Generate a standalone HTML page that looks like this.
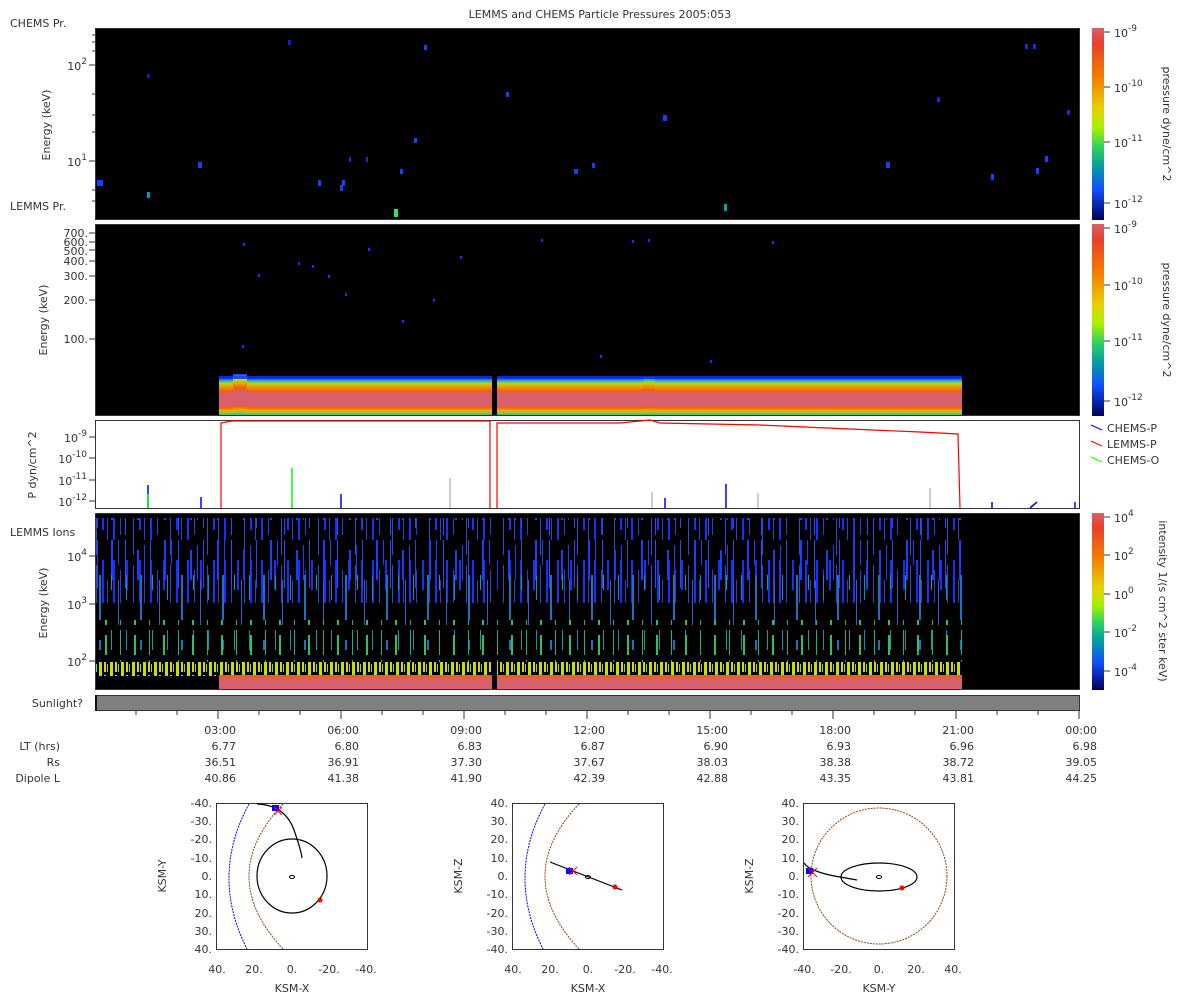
<!DOCTYPE html>
<html><head><meta charset="utf-8"><style>
html,body{margin:0;padding:0;background:#fff}
svg{display:block}
text{font-family:"DejaVu Sans","Liberation Sans",sans-serif;font-size:11px;fill:#333}
</style></head><body>
<svg width="1200" height="1000" viewBox="0 0 1200 1000" xmlns="http://www.w3.org/2000/svg">
<defs>
<linearGradient id="cb" x1="0" y1="0" x2="0" y2="1">
<stop offset="0" stop-color="#d9606a"/><stop offset="0.08" stop-color="#e8402a"/><stop offset="0.25" stop-color="#f57a00"/><stop offset="0.42" stop-color="#e8d000"/><stop offset="0.52" stop-color="#a8f000"/><stop offset="0.62" stop-color="#30d060"/><stop offset="0.72" stop-color="#00a0a0"/><stop offset="0.84" stop-color="#1050ff"/><stop offset="1" stop-color="#000060"/>
</linearGradient>
<linearGradient id="band" x1="0" y1="0" x2="0" y2="1">
<stop offset="0" stop-color="#1030ff"/><stop offset="0.08" stop-color="#30c0a0"/><stop offset="0.14" stop-color="#a0e020"/><stop offset="0.22" stop-color="#f0a000"/><stop offset="0.34" stop-color="#f06010"/><stop offset="0.42" stop-color="#d9606a"/><stop offset="0.72" stop-color="#d9606a"/><stop offset="0.78" stop-color="#f06010"/><stop offset="0.86" stop-color="#f0b000"/><stop offset="0.93" stop-color="#70d040"/><stop offset="1" stop-color="#20a0a0"/>
</linearGradient>
<pattern id="pb" width="37" height="80" patternUnits="userSpaceOnUse">
<rect x="2" y="0" width="2" height="60" fill="#1530ff"/><rect x="9" y="10" width="1" height="45" fill="#2040e0"/><rect x="15" y="0" width="2" height="30" fill="#1a30f0"/><rect x="22" y="5" width="1" height="70" fill="#2050d0"/><rect x="28" y="0" width="2" height="50" fill="#1530ff"/><rect x="33" y="20" width="1" height="40" fill="#3040c0"/>
</pattern>
<pattern id="pb2" width="53" height="60" patternUnits="userSpaceOnUse">
<rect x="5" y="0" width="2" height="40" fill="#1a40ff"/><rect x="19" y="0" width="1" height="55" fill="#2050ff"/><rect x="31" y="10" width="2" height="30" fill="#1840f0"/><rect x="44" y="0" width="1" height="48" fill="#2848e0"/><rect x="12" y="0" width="1" height="25" fill="#1a40ff"/><rect x="38" y="5" width="1" height="35" fill="#1a40ff"/>
</pattern>
<pattern id="pt" width="41" height="70" patternUnits="userSpaceOnUse">
<rect x="3" y="0" width="1" height="40" fill="#1090b0"/><rect x="17" y="10" width="2" height="50" fill="#2070c0"/><rect x="29" y="0" width="1" height="30" fill="#10a0a0"/><rect x="36" y="20" width="1" height="45" fill="#3060d0"/>
</pattern>
<pattern id="pg" width="29" height="30" patternUnits="userSpaceOnUse">
<rect x="4" y="0" width="1" height="25" fill="#20b080"/><rect x="18" y="5" width="2" height="20" fill="#30c060"/>
</pattern>
<pattern id="py" width="11" height="14" patternUnits="userSpaceOnUse">
<rect x="0" y="0" width="3" height="14" fill="#c8e000"/><rect x="5" y="3" width="2" height="11" fill="#e8d000"/><rect x="8" y="6" width="1" height="8" fill="#90e020"/>
</pattern>
</defs>

<text x="600" y="18" text-anchor="middle">LEMMS and CHEMS Particle Pressures  2005:053</text>

<!-- Panel 1 -->
<rect x="95" y="28" width="985" height="192" fill="#000"/>
<g fill="#1540ff">
<rect x="97" y="180" width="6" height="6"/><rect x="147" y="192" width="3" height="6" fill="#1090c0"/><rect x="147" y="74" width="3" height="4" fill="#1020c0"/><rect x="198" y="162" width="4" height="6"/><rect x="288" y="40" width="3" height="5" fill="#1020c0"/><rect x="318" y="180" width="3" height="6"/><rect x="340" y="185" width="3" height="6"/><rect x="342" y="180" width="3" height="6"/><rect x="349" y="157" width="2" height="5" fill="#1030d0"/><rect x="366" y="157" width="2" height="5" fill="#1030d0"/><rect x="394" y="209" width="4" height="8" fill="#30e060"/><rect x="400" y="169" width="3" height="5"/><rect x="414" y="138" width="3" height="5"/><rect x="424" y="45" width="3" height="5"/><rect x="506" y="92" width="3" height="5"/><rect x="574" y="169" width="4" height="5"/><rect x="592" y="163" width="3" height="5"/><rect x="663" y="115" width="4" height="6"/><rect x="724" y="204" width="3" height="7" fill="#10a0a0"/><rect x="886" y="162" width="4" height="6"/><rect x="937" y="97" width="3" height="5" fill="#1030d0"/><rect x="991" y="174" width="3" height="6"/><rect x="1025" y="44" width="3" height="5" fill="#1030d0"/><rect x="1033" y="44" width="3" height="5" fill="#1030d0"/><rect x="1036" y="168" width="3" height="6"/><rect x="1045" y="156" width="3" height="6"/><rect x="1067" y="110" width="3" height="5" fill="#1030d0"/>
</g>
<rect x="95.5" y="28.5" width="984" height="191" fill="none" stroke="#333"/>
<g stroke="#333"><line x1="89" y1="65" x2="95" y2="65"/><line x1="89" y1="161" x2="95" y2="161"/><line x1="92" y1="35" x2="95" y2="35"/><line x1="92" y1="42" x2="95" y2="42"/><line x1="92" y1="51" x2="95" y2="51"/><line x1="92" y1="94" x2="95" y2="94"/><line x1="92" y1="115" x2="95" y2="115"/><line x1="92" y1="132" x2="95" y2="132"/><line x1="92" y1="190" x2="95" y2="190"/><line x1="92" y1="201" x2="95" y2="201"/></g>
<text x="10" y="27">CHEMS Pr.</text>
<text x="10" y="210">LEMMS Pr.</text>
<text x="87" y="70" text-anchor="end" font-size="12">10<tspan dy="-6" font-size="9">2</tspan></text>
<text x="87" y="166" text-anchor="end" font-size="12">10<tspan dy="-6" font-size="9">1</tspan></text>
<text transform="translate(50,125) rotate(-90)" text-anchor="middle">Energy (keV)</text>

<!-- Panel 2 -->
<rect x="95" y="224" width="985" height="192" fill="#000"/>
<rect x="219" y="378" width="743" height="38" fill="url(#band)"/>
<rect x="233" y="374" width="14" height="42" fill="url(#band)"/>
<rect x="643" y="377" width="12" height="39" fill="url(#band)"/>
<rect x="219" y="376" width="743" height="3" fill="#1530ff" opacity="0.8"/>
<rect x="492" y="376" width="5" height="40" fill="#000"/>
<g fill="#1530ff">
<rect x="243" y="243" width="2" height="3"/><rect x="298" y="262" width="2" height="3"/><rect x="312" y="265" width="2" height="3"/><rect x="328" y="275" width="2" height="3"/><rect x="345" y="293" width="2" height="3"/><rect x="368" y="248" width="2" height="3"/><rect x="402" y="320" width="2" height="3"/><rect x="460" y="256" width="2" height="3"/><rect x="541" y="239" width="2" height="3"/><rect x="632" y="240" width="2" height="3"/><rect x="648" y="239" width="2" height="3"/><rect x="772" y="241" width="2" height="3"/><rect x="258" y="274" width="2" height="3"/><rect x="433" y="299" width="2" height="3"/><rect x="710" y="360" width="2" height="3"/><rect x="600" y="355" width="2" height="3"/><rect x="242" y="345" width="2" height="3"/>
</g>
<rect x="95.5" y="224.5" width="984" height="191" fill="none" stroke="#333"/>
<g stroke="#333"><line x1="89" y1="233" x2="95" y2="233"/><line x1="89" y1="242" x2="95" y2="242"/><line x1="89" y1="250" x2="95" y2="250"/><line x1="89" y1="261" x2="95" y2="261"/><line x1="89" y1="276" x2="95" y2="276"/><line x1="89" y1="300" x2="95" y2="300"/><line x1="89" y1="339" x2="95" y2="339"/></g>
<g text-anchor="end" font-size="11">
<text x="88" y="237">700.</text><text x="88" y="246">600.</text><text x="88" y="255">500.</text><text x="88" y="265">400.</text><text x="88" y="280">300.</text><text x="88" y="304">200.</text><text x="88" y="343">100.</text>
</g>
<text transform="translate(47,320) rotate(-90)" text-anchor="middle">Energy (keV)</text>

<!-- Line panel -->
<rect x="95.5" y="420.5" width="984" height="88" fill="#fff" stroke="#333"/>
<polyline points="221,508 221,423 232,421 490,421 490,508" fill="none" stroke="#f00" stroke-width="1.2"/>
<polyline points="497,508 497,423 620,423 650,420 660,423 760,425 850,429 920,432 958,434 960,508" fill="none" stroke="#f00" stroke-width="1.2"/>
<g stroke="#00f" stroke-width="1.5">
<line x1="148" y1="508" x2="148" y2="485"/><line x1="201" y1="508" x2="201" y2="497"/><line x1="341" y1="508" x2="341" y2="494"/><line x1="726" y1="508" x2="726" y2="484"/><line x1="665" y1="508" x2="665" y2="498"/><line x1="992" y1="508" x2="992" y2="502"/><line x1="1030" y1="508" x2="1037" y2="502"/><line x1="1075" y1="508" x2="1075" y2="502"/>
</g>
<g stroke="#0f0" stroke-width="1.5"><line x1="148" y1="508" x2="148" y2="494"/><line x1="292" y1="508" x2="292" y2="468"/></g>
<g stroke="#999" stroke-width="1"><line x1="450" y1="508" x2="450" y2="478"/><line x1="652" y1="508" x2="652" y2="492"/><line x1="758" y1="508" x2="758" y2="493"/><line x1="930" y1="508" x2="930" y2="488"/></g>
<g stroke="#333"><line x1="89" y1="437" x2="95" y2="437"/><line x1="89" y1="458" x2="95" y2="458"/><line x1="89" y1="480" x2="95" y2="480"/><line x1="89" y1="501" x2="95" y2="501"/></g>
<text x="87" y="442" text-anchor="end">10<tspan dy="-6" font-size="9">-9</tspan></text>
<text x="87" y="463" text-anchor="end">10<tspan dy="-6" font-size="9">-10</tspan></text>
<text x="87" y="485" text-anchor="end">10<tspan dy="-6" font-size="9">-11</tspan></text>
<text x="87" y="506" text-anchor="end">10<tspan dy="-6" font-size="9">-12</tspan></text>
<text transform="translate(36,465) rotate(-90)" text-anchor="middle">P dyn/cm^2</text>
<line x1="1091" y1="425" x2="1102" y2="430" stroke="#00f"/><text x="1107" y="432">CHEMS-P</text>
<line x1="1091" y1="441" x2="1102" y2="446" stroke="#f00"/><text x="1107" y="448">LEMMS-P</text>
<line x1="1091" y1="457" x2="1102" y2="462" stroke="#0f0"/><text x="1107" y="464">CHEMS-O</text>

<!-- Panel 4 -->
<rect x="95" y="513" width="985" height="177" fill="#000"/>
<rect x="95" y="518" width="867" height="85" fill="url(#pb)"/>
<rect x="95" y="518" width="867" height="70" fill="url(#pb2)"/>
<rect x="95" y="575" width="867" height="75" fill="url(#pt)"/>
<rect x="95" y="620" width="867" height="42" fill="url(#pg)"/>
<rect x="95" y="662" width="867" height="14" fill="url(#py)"/>
<rect x="219" y="676" width="743" height="14" fill="#d9606a"/>
<rect x="219" y="675" width="743" height="3" fill="#f06010"/>
<rect x="492" y="513" width="5" height="177" fill="#000"/>
<rect x="95.5" y="513.5" width="984" height="176" fill="none" stroke="#333"/>
<g stroke="#333"><line x1="89" y1="556" x2="95" y2="556"/><line x1="89" y1="604" x2="95" y2="604"/><line x1="89" y1="661" x2="95" y2="661"/></g>
<text x="10" y="536">LEMMS Ions</text>
<text x="87" y="561" text-anchor="end" font-size="12">10<tspan dy="-6" font-size="9">4</tspan></text>
<text x="87" y="609" text-anchor="end" font-size="12">10<tspan dy="-6" font-size="9">3</tspan></text>
<text x="87" y="666" text-anchor="end" font-size="12">10<tspan dy="-6" font-size="9">2</tspan></text>
<text transform="translate(47,603) rotate(-90)" text-anchor="middle">Energy (keV)</text>

<!-- Sunlight -->
<rect x="95.5" y="695.5" width="984" height="15" fill="#808080" stroke="#333"/>
<rect x="95" y="695" width="2" height="16" fill="#111"/>
<text x="83" y="707" text-anchor="end">Sunlight?</text>

<!-- Colorbars -->
<rect x="1092" y="28" width="12" height="192" fill="url(#cb)"/>
<rect x="1092" y="224" width="12" height="192" fill="url(#cb)"/>
<rect x="1092" y="513" width="12" height="177" fill="url(#cb)"/>
<g stroke="#333">
<line x1="1104" y1="32" x2="1110" y2="32"/><line x1="1104" y1="87" x2="1110" y2="87"/><line x1="1104" y1="142" x2="1110" y2="142"/><line x1="1104" y1="203" x2="1110" y2="203"/>
<line x1="1104" y1="228" x2="1110" y2="228"/><line x1="1104" y1="285" x2="1110" y2="285"/><line x1="1104" y1="341" x2="1110" y2="341"/><line x1="1104" y1="401" x2="1110" y2="401"/>
<line x1="1104" y1="517" x2="1110" y2="517"/><line x1="1104" y1="555" x2="1110" y2="555"/><line x1="1104" y1="594" x2="1110" y2="594"/><line x1="1104" y1="632" x2="1110" y2="632"/><line x1="1104" y1="671" x2="1110" y2="671"/>
</g>
<g font-size="12">
<text x="1114" y="37">10<tspan dy="-6" font-size="9">-9</tspan></text>
<text x="1114" y="92">10<tspan dy="-6" font-size="9">-10</tspan></text>
<text x="1114" y="147">10<tspan dy="-6" font-size="9">-11</tspan></text>
<text x="1114" y="208">10<tspan dy="-6" font-size="9">-12</tspan></text>
<text x="1114" y="233">10<tspan dy="-6" font-size="9">-9</tspan></text>
<text x="1114" y="290">10<tspan dy="-6" font-size="9">-10</tspan></text>
<text x="1114" y="346">10<tspan dy="-6" font-size="9">-11</tspan></text>
<text x="1114" y="406">10<tspan dy="-6" font-size="9">-12</tspan></text>
<text x="1114" y="522">10<tspan dy="-6" font-size="9">4</tspan></text>
<text x="1114" y="560">10<tspan dy="-6" font-size="9">2</tspan></text>
<text x="1114" y="599">10<tspan dy="-6" font-size="9">0</tspan></text>
<text x="1114" y="637">10<tspan dy="-6" font-size="9">-2</tspan></text>
<text x="1114" y="676">10<tspan dy="-6" font-size="9">-4</tspan></text>
</g>
<text transform="translate(1163,124) rotate(90)" text-anchor="middle">pressure dyne/cm^2</text>
<text transform="translate(1163,320) rotate(90)" text-anchor="middle">pressure dyne/cm^2</text>
<text transform="translate(1159,601) rotate(90)" text-anchor="middle">intensity 1/(s cm^2 ster keV)</text>

<!-- time axis ticks -->
<g stroke="#333">
<line x1="136" y1="711" x2="136" y2="715"/><line x1="177" y1="711" x2="177" y2="715"/><line x1="218" y1="711" x2="218" y2="719"/>
<line x1="259" y1="711" x2="259" y2="715"/><line x1="300" y1="711" x2="300" y2="715"/><line x1="341" y1="711" x2="341" y2="719"/>
<line x1="382" y1="711" x2="382" y2="715"/><line x1="423" y1="711" x2="423" y2="715"/><line x1="464" y1="711" x2="464" y2="719"/>
<line x1="505" y1="711" x2="505" y2="715"/><line x1="546" y1="711" x2="546" y2="715"/><line x1="587" y1="711" x2="587" y2="719"/>
<line x1="628" y1="711" x2="628" y2="715"/><line x1="669" y1="711" x2="669" y2="715"/><line x1="710" y1="711" x2="710" y2="719"/>
<line x1="751" y1="711" x2="751" y2="715"/><line x1="792" y1="711" x2="792" y2="715"/><line x1="833" y1="711" x2="833" y2="719"/>
<line x1="874" y1="711" x2="874" y2="715"/><line x1="915" y1="711" x2="915" y2="715"/><line x1="956" y1="711" x2="956" y2="719"/>
<line x1="997" y1="711" x2="997" y2="715"/><line x1="1038" y1="711" x2="1038" y2="715"/><line x1="1079" y1="711" x2="1079" y2="719"/>
</g>
<g text-anchor="end">
<text x="236" y="734">03:00</text><text x="359" y="734">06:00</text><text x="482" y="734">09:00</text><text x="605" y="734">12:00</text><text x="728" y="734">15:00</text><text x="851" y="734">18:00</text><text x="974" y="734">21:00</text><text x="1097" y="734">00:00</text>
<text x="236" y="750">6.77</text><text x="359" y="750">6.80</text><text x="482" y="750">6.83</text><text x="605" y="750">6.87</text><text x="728" y="750">6.90</text><text x="851" y="750">6.93</text><text x="974" y="750">6.96</text><text x="1097" y="750">6.98</text>
<text x="236" y="766">36.51</text><text x="359" y="766">36.91</text><text x="482" y="766">37.30</text><text x="605" y="766">37.67</text><text x="728" y="766">38.03</text><text x="851" y="766">38.38</text><text x="974" y="766">38.72</text><text x="1097" y="766">39.05</text>
<text x="236" y="782">40.86</text><text x="359" y="782">41.38</text><text x="482" y="782">41.90</text><text x="605" y="782">42.39</text><text x="728" y="782">42.88</text><text x="851" y="782">43.35</text><text x="974" y="782">43.81</text><text x="1097" y="782">44.25</text>
<text x="60" y="750">LT (hrs)</text><text x="60" y="766">Rs</text><text x="60" y="782">Dipole L</text>
</g>

<!-- Orbit plot 1 -->
<g>
<rect x="216.5" y="803.5" width="151" height="146" fill="none" stroke="#333"/>
<g text-anchor="end" font-size="11"><text x="212" y="807">-40.</text><text x="212" y="825">-30.</text><text x="212" y="843">-20.</text><text x="212" y="862">-10.</text><text x="212" y="880">0.</text><text x="212" y="898">10.</text><text x="212" y="917">20.</text><text x="212" y="935">30.</text><text x="212" y="953">40.</text></g>
<g text-anchor="middle"><text x="217" y="973">40.</text><text x="254" y="973">20.</text><text x="292" y="973">0.</text><text x="329" y="973">-20.</text><text x="366" y="973">-40.</text></g>
<text x="292" y="992" text-anchor="middle">KSM-X</text>
<text transform="translate(166,876) rotate(-90)" text-anchor="middle">KSM-Y</text>
<path d="M249,804 Q210,876 247,949" fill="none" stroke="#00f" stroke-dasharray="2,1"/>
<path d="M283,804 Q215,876 283,949" fill="none" stroke="#8b4513" stroke-dasharray="2,1"/>
<ellipse cx="292" cy="876" rx="35" ry="37" fill="none" stroke="#000" stroke-width="1.2"/>
<ellipse cx="292" cy="877" rx="2.5" ry="1.5" fill="none" stroke="#000"/>
<path d="M257,804 Q285,805 294,830 Q301,850 302,858" fill="none" stroke="#000" stroke-width="1.2"/>
<rect x="272" y="805" width="7" height="6" fill="#00f"/>
<path d="M274,807 l8,8 M282,807 l-8,8" stroke="#f00"/>
<circle cx="320" cy="900" r="2.5" fill="#f00"/>
</g>

<!-- Orbit plot 2 -->
<g>
<rect x="512.5" y="803.5" width="151" height="146" fill="none" stroke="#333"/>
<g text-anchor="end" font-size="11"><text x="508" y="807">40.</text><text x="508" y="825">30.</text><text x="508" y="843">20.</text><text x="508" y="862">10.</text><text x="508" y="880">0.</text><text x="508" y="898">-10.</text><text x="508" y="917">-20.</text><text x="508" y="935">-30.</text><text x="508" y="953">-40.</text></g>
<g text-anchor="middle"><text x="513" y="973">40.</text><text x="550" y="973">20.</text><text x="588" y="973">0.</text><text x="625" y="973">-20.</text><text x="662" y="973">-40.</text></g>
<text x="588" y="992" text-anchor="middle">KSM-X</text>
<text transform="translate(462,876) rotate(-90)" text-anchor="middle">KSM-Z</text>
<path d="M545,804 Q506,876 543,949" fill="none" stroke="#00f" stroke-dasharray="2,1"/>
<path d="M579,804 Q511,876 579,949" fill="none" stroke="#8b4513" stroke-dasharray="2,1"/>
<ellipse cx="588" cy="877" rx="2.5" ry="1.5" fill="none" stroke="#000"/>
<line x1="550" y1="862" x2="622" y2="890" stroke="#000" stroke-width="1.2"/>
<rect x="566" y="868" width="7" height="6" fill="#00f"/>
<path d="M569,867 l8,8 M577,867 l-8,8" stroke="#f00"/>
<circle cx="615" cy="887" r="2.5" fill="#f00"/>
</g>

<!-- Orbit plot 3 -->
<g>
<rect x="803.5" y="803.5" width="151" height="146" fill="none" stroke="#333"/>
<g text-anchor="end" font-size="11"><text x="799" y="807">40.</text><text x="799" y="825">30.</text><text x="799" y="843">20.</text><text x="799" y="862">10.</text><text x="799" y="880">0.</text><text x="799" y="898">-10.</text><text x="799" y="917">-20.</text><text x="799" y="935">-30.</text><text x="799" y="953">-40.</text></g>
<g text-anchor="middle"><text x="804" y="973">-40.</text><text x="841" y="973">-20.</text><text x="879" y="973">0.</text><text x="916" y="973">20.</text><text x="953" y="973">40.</text></g>
<text x="879" y="992" text-anchor="middle">KSM-Y</text>
<text transform="translate(753,876) rotate(-90)" text-anchor="middle">KSM-Z</text>
<circle cx="879" cy="876" r="68" fill="none" stroke="#8b4513" stroke-dasharray="2,1"/>
<ellipse cx="879" cy="877" rx="38" ry="14" fill="none" stroke="#000" stroke-width="1.2"/>
<ellipse cx="879" cy="877" rx="2.5" ry="1.5" fill="none" stroke="#000"/>
<path d="M804,863 Q810,872 840,877 L857,880" fill="none" stroke="#000" stroke-width="1.2"/>
<rect x="806" y="868" width="7" height="6" fill="#00f"/>
<path d="M808,868 l9,9 M817,868 l-9,9" stroke="#f00"/>
<circle cx="902" cy="888" r="2.5" fill="#f00"/>
</g>
</svg>
</body></html>
